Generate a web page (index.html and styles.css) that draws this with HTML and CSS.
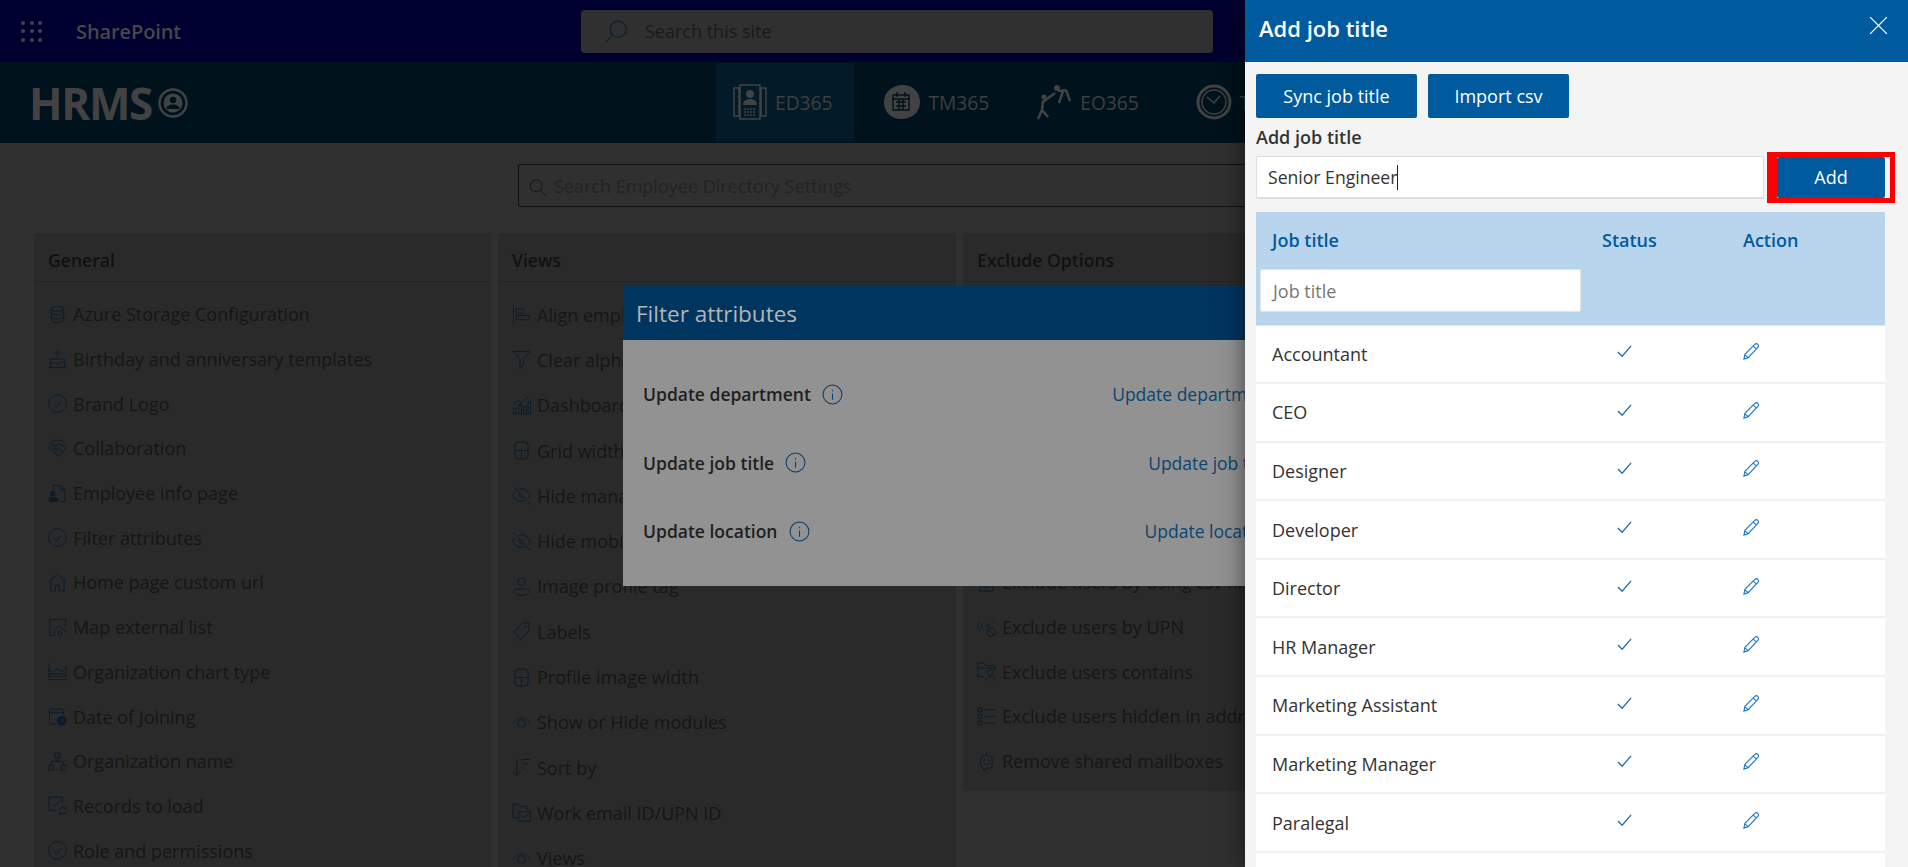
FILE: index.html
```html
<!DOCTYPE html>
<html lang="en">
<head>
  <meta charset="UTF-8">
  <title>Add job title</title>
  <link rel="stylesheet" href="styles.css">
</head>
<body>
  <svg class="icon-defs" width="0" height="0">
    <symbol id="i-db" viewBox="0 0 20 20"><ellipse cx="10" cy="4" rx="6.5" ry="2.6"/><path d="M3.5 4v12c0 1.4 3 2.6 6.5 2.6s6.5-1.2 6.5-2.6V4M3.5 8c0 1.4 3 2.6 6.5 2.6s6.5-1.2 6.5-2.6M3.5 12c0 1.4 3 2.6 6.5 2.6s6.5-1.2 6.5-2.6"/></symbol>
    <symbol id="i-cake" viewBox="0 0 20 20"><circle cx="10" cy="3" r="1.5"/><path d="M10 5v3M2.5 18V9.5h15V18M.5 18.5h19M2.5 13.5c2 1.5 3.5-1.5 5 0s3.5 1.5 5 0 3.5-1 5 0"/></symbol>
    <symbol id="i-badge" viewBox="0 0 20 20"><path d="M10 1A6 6 0 0 1 16.4 3.6 6 6 0 0 1 19 10 6 6 0 0 1 16.4 16.4 6 6 0 0 1 10 19 6 6 0 0 1 3.6 16.4 6 6 0 0 1 1 10 6 6 0 0 1 3.6 3.6 6 6 0 0 1 10 1Z"/><path d="M6 10.5l3 3 5-6"/></symbol>
    <symbol id="i-hands" viewBox="0 0 20 20"><path d="M2 6a9 9 0 0 1 16 0M1 9l3-3 4 1 3-2 3 1 5 3-3 4-2 3-2 1-2 1-3-3-3-3zM8 7l-2 3 3 1 2-2 4 4M6 13l3 3M8 11.5l3 3"/></symbol>
    <symbol id="i-docperson" viewBox="0 0 20 20"><path d="M6 6V1.5h7l5 5V17a1.5 1.5 0 0 1-1.5 1.5H13M13 1.5v5h5"/><circle class="solid" cx="5" cy="10" r="3"/><rect class="solid" x=".5" y="14" width="10" height="5" rx="2.5"/></symbol>
    <symbol id="i-home" viewBox="0 0 20 20"><path d="M1 9l9-8 9 8M3 7.5V19h5v-6h4v6h5V7.5"/></symbol>
    <symbol id="i-maplist" viewBox="0 0 20 20"><path d="M2 19V1.5h16.5V10M2 18.5h4M7 19v-6l5-5 7 7M11 19v-5l3 1v4"/></symbol>
    <symbol id="i-area" viewBox="0 0 20 20"><path d="M1 2v16.5h18.5M1 8l4 3 5-4 4 3 5-4v9H1M1 13l4-1 5 1 4-1 5 1"/></symbol>
    <symbol id="i-calclock" viewBox="0 0 20 20"><path d="M9 18H4a2.5 2.5 0 0 1-2.5-2.5v-11A2.5 2.5 0 0 1 4 2h10a2.5 2.5 0 0 1 2.5 2.5V9M1.5 6h15"/><circle class="solid" cx="14.5" cy="14.5" r="5"/><path class="hole" d="M14.5 12v3H17"/></symbol>
    <symbol id="i-org" viewBox="0 0 20 20"><rect x="7.5" y="1" width="5" height="5"/><rect x="1" y="14" width="5" height="5"/><rect x="14" y="14" width="5" height="5"/><path d="M10 6v4M3.5 14v-4h13v4"/></symbol>
    <symbol id="i-records" viewBox="0 0 20 20"><path d="M15 8V1H1v14h8M4 8l3 3 6-7"/><path d="M12 15a4 4 0 0 1 7-2M19 10.5V13h-2.5M19 16a4 4 0 0 1-7 2M12 20v-2.5h2.5"/></symbol>
    <symbol id="i-align" viewBox="0 0 20 20"><path d="M1.5 0v20"/><rect x="4.5" y="4" width="8" height="4.5"/><rect x="4.5" y="11" width="14" height="4.5"/></symbol>
    <symbol id="i-funnel" viewBox="0 0 20 20"><path d="M1.5 1.5h17L12 10v5l-3.5 4.5V10z"/></symbol>
    <symbol id="i-dash" viewBox="0 0 20 20"><path d="M1.5 19v-6h3v6zM7 19V9h3v10zM12 19v-8h3v8zM17 19V6h2.5v13zM1 9l5-4 4 2 7-6"/></symbol>
    <symbol id="i-gridw" viewBox="0 0 20 20"><rect x="3" y="1" width="14" height="18" rx="4"/><path d="M3 10h14M10 10v9"/></symbol>
    <symbol id="i-eyeoff" viewBox="0 0 20 20"><path d="M2 1l17 18M3 6c-1 1.5-2 3-2 4 2 4 5 6 9 6 1.5 0 3-.3 4-1M7 3.5A9 9 0 0 1 19 10c-.6 1-1.2 2-2 2.8M8 8a3 3 0 0 0 4 4"/></symbol>
    <symbol id="i-person" viewBox="0 0 20 20"><circle cx="10" cy="5" r="4"/><path d="M2 15a2.5 2.5 0 0 1 2.5-2.5h11A2.5 2.5 0 0 1 18 15c0 3-4 4.5-8 4.5S2 18 2 15z"/></symbol>
    <symbol id="i-tag" viewBox="0 0 20 20"><path d="M2 10l9-9h7v8l-9 10z"/><circle cx="14" cy="5" r=".8"/></symbol>
    <symbol id="i-eye" viewBox="0 0 20 20"><path d="M1 11a10 10 0 0 1 18 0"/><circle cx="10" cy="11" r="4"/></symbol>
    <symbol id="i-sort" viewBox="0 0 20 20"><path d="M5 1v17M1 14l4 4.5L9 14M10 1.5h9M10 6h6M10 10.5h3"/></symbol>
    <symbol id="i-mailfolder" viewBox="0 0 20 20"><path d="M5 15.5H1V1h5l2 2.5h8V7"/><rect x="7" y="9" width="12.5" height="10"/><path d="M7 10l6 5 6.5-5"/></symbol>
    <symbol id="i-file" viewBox="0 0 20 20"><path d="M3 1h9l5 5v13H3zM6 11h8M6 15h8"/></symbol>
    <symbol id="i-radio" viewBox="0 0 20 20"><path d="M3 3c-3 3-3 8 0 11M6 5c-1.5 2-1.5 5 0 7M17 2c1 1 1.5 2 2 3"/><circle cx="11" cy="8" r="1.5"/><circle cx="15" cy="15" r="4.5"/><path d="M12 12l6 6"/></symbol>
    <symbol id="i-folderperson" viewBox="0 0 20 20"><path d="M7 15.5H1V1h6l2 3h10v5M1 6.5h18"/><circle cx="14" cy="11" r="3"/><path d="M9.5 19.5c0-3 2-4.5 4.5-4.5s4.5 1.5 4.5 4.5"/></symbol>
    <symbol id="i-list" viewBox="0 0 20 20"><rect x="1" y="1" width="4" height="4"/><rect x="1" y="8" width="4" height="4"/><rect x="1" y="15" width="4" height="4"/><path d="M8 3h11M8 10h11M8 17h11"/></symbol>
    <symbol id="i-bot" viewBox="0 0 20 20"><path d="M10 0v4M7 17v3l3-3h3a3 3 0 0 0 3-3V7a3 3 0 0 0-3-3H7a3 3 0 0 0-3 3v7a3 3 0 0 0 3 3M7 12c1.5 1.5 4.5 1.5 6 0"/><circle class="solid" cx="7.5" cy="8.5" r="1"/><circle class="solid" cx="12.5" cy="8.5" r="1"/></symbol>
    <symbol id="i-search" viewBox="0 0 20 20"><circle cx="8.5" cy="8" r="7"/><path d="M13.5 13l6 6.5"/></symbol>
    <symbol id="i-info" viewBox="0 0 20 20"><circle cx="10" cy="10" r="9"/><path d="M10 9v6M10 5.5V7"/></symbol>
    <symbol id="i-check" viewBox="0 0 16 16"><path d="M1 8.5L5.5 13 15 2"/></symbol>
    <symbol id="i-pencil" viewBox="0 0 18 18"><path d="M1 17l1-5L12.5 1.5c1-1 2.2-1 3.2 0s1 2.2 0 3.2L5.5 15.5zM2 12.5l3.5 3M11 3.5l3.5 3"/></symbol>
  </svg>

  <div class="app">
    <div class="site">
      <header class="suite-bar">
        <div class="waffle">
          <span></span><span></span><span></span><span></span><span></span><span></span><span></span><span></span><span></span>
        </div>
        <div class="suite-name">SharePoint</div>
        <div class="site-search">
          <svg class="line site-search-icon"><use href="#i-search" transform="matrix(-1 0 0 1 23 0)"/></svg>
          <span>Search this site</span>
        </div>
      </header>

      <nav class="hrms-bar">
        <div class="hrms-logo">
          <span>HRMS</span>
          <svg width="30" height="30" viewBox="0 0 30 30">
            <circle cx="15" cy="15" r="13.5" fill="none" stroke="#424242" stroke-width="2.5"/>
            <circle cx="15" cy="15" r="9.5" fill="#424242"/>
            <circle cx="15" cy="12" r="3.2" fill="#00121c"/>
            <path d="M8.5 21c0-3 3-4.5 6.5-4.5s6.5 1.5 6.5 4.5z" fill="#00121c"/>
          </svg>
        </div>
        <div class="modules">
          <a class="module active">
            <svg width="34" height="36" viewBox="0 0 34 36" class="module-icon">
              <path d="M1 4h5v28H1zM28 4h5v28h-5zM7 1h20v34H7z" fill="none" stroke="#424242" stroke-width="1.5"/>
              <circle cx="17" cy="10" r="4" fill="#424242"/>
              <path d="M10 21c0-4 3-6 7-6s7 2 7 6z" fill="#424242"/>
              <path d="M11 25h12M11 28h12M11 31h12" stroke="#424242" stroke-width="1.5" stroke-dasharray="2 1"/>
            </svg>
            <span>ED365</span>
          </a>
          <a class="module">
            <svg width="38" height="36" viewBox="0 0 38 36" class="module-icon">
              <path d="M18 1c9-1 19 5 19 17 0 11-9 17-19 17C9 35 1 29 1 18 1 8 9 2 18 1z" fill="#424242"/>
              <path d="M10 11h16v15H10zM10 15h16M14 8v5M22 8v5M13 18h10M13 22h10M16 15v11M20 15v11" fill="none" stroke="#00121c" stroke-width="1.4"/>
            </svg>
            <span>TM365</span>
          </a>
          <a class="module">
            <svg width="36" height="36" viewBox="0 0 36 36" class="module-icon">
              <circle cx="8" cy="13" r="2.5" fill="#424242"/>
              <circle cx="21" cy="4" r="3" fill="#424242"/>
              <path d="M7 17L6 26M6 26L2 35M6 26l6 7M7 18l12-9M22 7l8-1M30 6l4 11M27 7l-4 12" fill="none" stroke="#424242" stroke-width="2.5"/>
            </svg>
            <span>EO365</span>
          </a>
          <a class="module module-last">
            <svg width="36" height="36" viewBox="0 0 36 36" class="module-icon">
              <circle cx="18" cy="18" r="16" fill="none" stroke="#424242" stroke-width="3"/>
              <circle cx="18" cy="18" r="12" fill="none" stroke="#424242" stroke-width="1.5"/>
              <path d="M11 13l7 6 6-7" fill="none" stroke="#424242" stroke-width="1.5"/>
            </svg>
            <span>TS365</span>
          </a>
        </div>
      </nav>

      <main class="settings">
        <div class="settings-search">
          <svg class="line settings-search-icon"><use href="#i-search"/></svg>
          <span>Search Employee Directory Settings</span>
        </div>
        <div class="columns">
          <section class="column">
            <h3>General</h3>
            <ul class="items">
              <li><svg><use href="#i-db"/></svg>Azure Storage Configuration</li>
              <li><svg><use href="#i-cake"/></svg>Birthday and anniversary templates</li>
              <li><svg><use href="#i-badge"/></svg>Brand Logo</li>
              <li><svg><use href="#i-hands"/></svg>Collaboration</li>
              <li><svg><use href="#i-docperson"/></svg>Employee info page</li>
              <li><svg><use href="#i-badge"/></svg>Filter attributes</li>
              <li><svg><use href="#i-home"/></svg>Home page custom url</li>
              <li><svg><use href="#i-maplist"/></svg>Map external list</li>
              <li><svg><use href="#i-area"/></svg>Organization chart type</li>
              <li><svg><use href="#i-calclock"/></svg>Date of Joining</li>
              <li><svg><use href="#i-org"/></svg>Organization name</li>
              <li><svg><use href="#i-records"/></svg>Records to load</li>
              <li><svg><use href="#i-badge"/></svg>Role and permissions</li>
            </ul>
          </section>
          <section class="column">
            <h3>Views</h3>
            <ul class="items items-wide">
              <li><svg><use href="#i-align"/></svg>Align employee details</li>
              <li><svg><use href="#i-funnel"/></svg>Clear alphabet filter</li>
              <li><svg><use href="#i-dash"/></svg>Dashboard</li>
              <li><svg><use href="#i-gridw"/></svg>Grid width</li>
              <li><svg><use href="#i-eyeoff"/></svg>Hide manager</li>
              <li><svg><use href="#i-eyeoff"/></svg>Hide mobile</li>
              <li><svg><use href="#i-person"/></svg>Image profile tag</li>
              <li><svg><use href="#i-tag"/></svg>Labels</li>
              <li><svg><use href="#i-gridw"/></svg>Profile image width</li>
              <li><svg><use href="#i-eye"/></svg>Show or Hide modules</li>
              <li><svg><use href="#i-sort"/></svg>Sort by</li>
              <li><svg><use href="#i-mailfolder"/></svg>Work email ID/UPN ID</li>
              <li><svg><use href="#i-eye"/></svg>Views</li>
            </ul>
          </section>
          <section class="column column-short">
            <h3>Exclude Options</h3>
            <ul class="items items-exclude">
              <li><svg><use href="#i-file"/></svg>Exclude users by using csv file</li>
              <li><svg><use href="#i-radio"/></svg>Exclude users by UPN</li>
              <li><svg><use href="#i-folderperson"/></svg>Exclude users contains</li>
              <li><svg><use href="#i-list"/></svg>Exclude users hidden in address book</li>
              <li><svg><use href="#i-bot"/></svg>Remove shared mailboxes</li>
            </ul>
          </section>
        </div>
      </main>

      <div class="dialog">
        <div class="dialog-title">Filter attributes</div>
        <div class="dialog-body">
          <div class="dialog-row">
            <b>Update department</b><svg class="line info"><use href="#i-info"/></svg>
            <a>Update department</a>
          </div>
          <div class="dialog-row">
            <b>Update job title</b><svg class="line info"><use href="#i-info"/></svg>
            <a>Update job title</a>
          </div>
          <div class="dialog-row">
            <b>Update location</b><svg class="line info"><use href="#i-info"/></svg>
            <a>Update location</a>
          </div>
        </div>
      </div>
    </div>

    <aside class="panel">
      <div class="panel-head">
        <h2>Add job title</h2>
        <svg class="panel-close" viewBox="0 0 17 17"><path d="M1 1l15 15M16 1L1 16"/></svg>
      </div>
      <div class="panel-body">
        <div class="panel-actions">
          <button class="btn btn-sync">Sync job title</button>
          <button class="btn btn-import">Import csv</button>
        </div>
        <label class="add-label">Add job title</label>
        <div class="add-row">
          <div class="add-input">Senior Engineer<span class="caret"></span></div>
          <div class="add-highlight"><button class="btn btn-add">Add</button></div>
        </div>
        <div class="jobs">
          <div class="jobs-head">
            <div class="jobs-cols">
              <span>Job title</span><span>Status</span><span>Action</span>
            </div>
            <div class="jobs-filter">Job title</div>
          </div>
          <div class="job"><span>Accountant</span><svg class="line tick"><use href="#i-check"/></svg><svg class="line edit"><use href="#i-pencil"/></svg></div>
          <div class="job"><span>CEO</span><svg class="line tick"><use href="#i-check"/></svg><svg class="line edit"><use href="#i-pencil"/></svg></div>
          <div class="job"><span>Designer</span><svg class="line tick"><use href="#i-check"/></svg><svg class="line edit"><use href="#i-pencil"/></svg></div>
          <div class="job"><span>Developer</span><svg class="line tick"><use href="#i-check"/></svg><svg class="line edit"><use href="#i-pencil"/></svg></div>
          <div class="job"><span>Director</span><svg class="line tick"><use href="#i-check"/></svg><svg class="line edit"><use href="#i-pencil"/></svg></div>
          <div class="job"><span>HR Manager</span><svg class="line tick"><use href="#i-check"/></svg><svg class="line edit"><use href="#i-pencil"/></svg></div>
          <div class="job"><span>Marketing Assistant</span><svg class="line tick"><use href="#i-check"/></svg><svg class="line edit"><use href="#i-pencil"/></svg></div>
          <div class="job"><span>Marketing Manager</span><svg class="line tick"><use href="#i-check"/></svg><svg class="line edit"><use href="#i-pencil"/></svg></div>
          <div class="job"><span>Paralegal</span><svg class="line tick"><use href="#i-check"/></svg><svg class="line edit"><use href="#i-pencil"/></svg></div>
        </div>
      </div>
    </aside>
  </div>
</body>
</html>
```

FILE: styles.css
```css
* {
  box-sizing: border-box;
}

html, body {
  margin: 0;
  height: 100%;
  overflow: hidden;
}

body {
  font-family: "Open Sans", "Noto Sans", sans-serif;
  font-size: 18px;
  color: #161616;
  background: #303030;
}

.icon-defs {
  position: absolute;
}

.icon-defs .solid {
  fill: currentColor;
  stroke: none;
}

.icon-defs .hole {
  fill: none;
  stroke: #2a2a2a;
}

/* stroke icons take their look from the svg that uses them */
.line, .items svg {
  fill: none;
  stroke: currentColor;
  stroke-width: 1;
}

.app {
  display: flex;
  height: 867px;
}

.site {
  position: relative;
  flex: 0 0 1245px;
  overflow: hidden;
}

/* suite bar */
.suite-bar {
  display: flex;
  align-items: center;
  height: 62px;
  background: #000030;
}

.waffle {
  display: grid;
  grid-template-columns: repeat(3, 4px);
  gap: 4.5px;
  margin-left: 21px;
}

.waffle span {
  width: 4px;
  height: 4px;
  border-radius: 50%;
  background: #424242;
}

.suite-name {
  flex: none;
  width: 112px;
  margin-left: 34px;
  font-size: 20px;
  font-weight: 600;
  color: #474747;
  letter-spacing: -.1px;
}

.site-search {
  display: flex;
  align-items: center;
  width: 632px;
  height: 43px;
  margin-left: 393px;
  padding-left: 24px;
  border-radius: 4px;
  background: #303030;
  color: #1a1a1a;
}

.site-search-icon {
  width: 23px;
  height: 23px;
  margin-right: 17px;
  color: #0b2030;
}

/* product bar */
.hrms-bar {
  display: flex;
  height: 81px;
  padding-top: 1px;
  background: #00121c;
}

.hrms-logo {
  display: flex;
  flex: none;
  align-items: center;
  gap: 6px;
  width: 716px;
  padding-left: 29px;
  font-size: 44px;
  font-weight: 700;
  color: #424242;
  letter-spacing: -1.4px;
}

.modules {
  display: flex;
  flex: none;
  gap: 10px;
}

.module {
  display: flex;
  align-items: center;
  height: 78px;
  padding: 0 18px 0 19px;
  font-size: 19.2px;
  color: #3f3f3f;
}

.module.active {
  padding: 0 21px 0 17px;
  background: #031a28;
}

.module-last {
  margin-left: 10px;
}

.module-icon {
  margin-right: 8px;
}

/* settings page */
.settings {
  padding: 21px 0 0 34px;
}

.settings-search {
  display: flex;
  align-items: center;
  width: 1000px;
  height: 43px;
  margin-left: 484px;
  padding-left: 10px;
  border: 1px solid #111;
  border-radius: 2px;
  color: #232323;
}

.settings-search-icon {
  width: 17px;
  height: 17px;
  margin: 4px 8px 0 0;
  color: #0f0f0f;
}

.columns {
  display: grid;
  grid-template-columns: 457px 458px 458px;
  gap: 7px;
  align-items: start;
  margin-top: 26px;
}

.column {
  height: 640px;
  background: #2a2a2a;
}

.column-short {
  height: 558px;
}

.column h3 {
  height: 49px;
  margin: 0;
  padding: 0 14px;
  border-bottom: 1px solid #232323;
  font-size: 17.6px;
  font-weight: 600;
  line-height: 54px;
  color: #111;
}

.items {
  margin: 0;
  padding: 10px 0 0 14px;
  list-style: none;
}

.items li {
  display: flex;
  align-items: center;
  height: 44.7px;
  white-space: nowrap;
}

.items-wide li {
  height: 45.3px;
}

/* first six rows of this list sit behind the dialog */
.items-exclude {
  padding-top: 278px;
}

.items svg {
  flex: none;
  width: 19px;
  height: 19px;
  margin-right: 6px;
  color: #081c2c;
}

/* dialog behind the panel */
.dialog {
  position: absolute;
  left: 623px;
  top: 286px;
  width: 660px;
  height: 300px;
  background: #929292;
}

.dialog-title {
  height: 54px;
  padding-left: 13px;
  background: #003560;
  font-size: 22.5px;
  line-height: 56px;
  color: #b4b4b4;
}

.dialog-body {
  padding: 20px 9px 0 20px;
}

.dialog-row {
  display: flex;
  align-items: center;
  height: 68.5px;
  font-size: 17.5px;
}

.dialog-row b {
  font-weight: 600;
  color: #1f1f1f;
}

.info {
  width: 21px;
  height: 21px;
  margin-left: 11px;
  color: #0a3f6b;
}

.dialog-row a {
  margin-left: auto;
  color: #0a4573;
}

/* right panel */
.panel {
  position: relative;
  display: flex;
  flex-direction: column;
  flex: 1;
  background: #f4f4f4;
  box-shadow: 0 0 24px rgba(0, 0, 0, .55);
}

.panel-head {
  display: flex;
  align-items: center;
  justify-content: space-between;
  height: 62px;
  padding: 0 20px 6px 14px;
  background: #005a9e;
}

.panel-head h2 {
  margin: 0;
  font-size: 22px;
  font-weight: 600;
  color: #fff;
}

.panel-close {
  width: 19px;
  height: 19px;
  margin: -6px 10px 0 0;
  fill: none;
  stroke: #fff;
  stroke-width: 1.2;
}

.panel-body {
  display: flex;
  flex: 1;
  flex-direction: column;
  min-height: 0;
  padding: 12px 23px 0 11px;
}

.panel-actions {
  display: flex;
  gap: 11px;
}

.btn {
  height: 44px;
  border: none;
  border-radius: 2px;
  background: #005a9e;
  font-family: inherit;
  font-size: 18px;
  font-weight: 500;
  color: #fff;
}

.btn-sync {
  width: 161px;
}

.btn-import {
  width: 141px;
}

.add-label {
  margin-top: 8px;
  font-weight: 600;
  line-height: 22px;
  color: #333;
}

.add-row {
  display: flex;
  height: 51px;
  margin-top: 4px;
}

.add-input {
  display: flex;
  align-items: center;
  width: 508px;
  height: 43px;
  margin-top: 4px;
  padding-left: 11px;
  border: 1px solid #dedede;
  border-bottom-width: 2px;
  border-radius: 2px;
  background: #fff;
  font-size: 17.6px;
  color: #333;
}

.caret {
  width: 1px;
  height: 25px;
  background: #222;
}

.add-highlight {
  width: 128px;
  height: 51px;
  margin-left: 3px;
  border: 5px solid #f00;
  border-left-width: 10px;
}

.btn-add {
  display: block;
  width: 108px;
  height: 41px;
  padding-bottom: 3px;
}

.jobs {
  flex: 1;
  width: 629px;
  margin-top: 9px;
  background: #fff;
  overflow: hidden;
}

.jobs-head {
  height: 113.5px;
  padding-top: 12px;
  border-bottom: 1px solid #e4e4e0;
  background: #b9d5ee;
}

.jobs-cols {
  display: grid;
  grid-template-columns: 330px 141px 1fr;
  padding-left: 16px;
  font-weight: 600;
  line-height: 32px;
  color: #005a9e;
}

.jobs-filter {
  display: flex;
  align-items: center;
  width: 321px;
  height: 43px;
  margin: 13px 0 0 4px;
  padding-left: 12px;
  border: 1px solid #e4e4e4;
  border-radius: 2px;
  background: #fff;
  color: #777;
}

.job {
  display: grid;
  grid-template-columns: 330px 141px 1fr;
  align-items: center;
  height: 58.6px;
  padding-left: 16px;
  border-bottom: 2px solid #f0f0f0;
  color: #333;
}

.tick {
  width: 15px;
  height: 15px;
  margin: -4px 0 0 15px;
  color: #1f6fa8;
  stroke-width: 1.4;
}

.edit {
  width: 17px;
  height: 17px;
  margin-top: -4px;
  color: #1f78c1;
  stroke-width: 1.2;
}
```
